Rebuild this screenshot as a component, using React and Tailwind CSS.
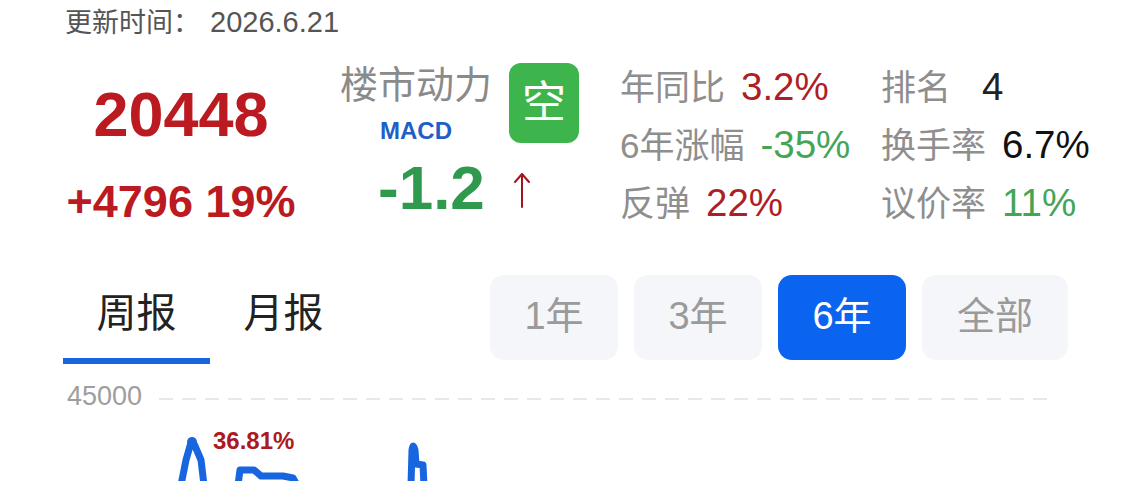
import React from 'react';

const FONT = "font-['Liberation_Sans','Noto_Sans_CJK_SC',sans-serif]";

const stats = [
  [
    { label: '年同比', value: '3.2%', color: 'text-[#ad1f26]' },
    { label: '排名', value: '4', color: 'text-[#222]', gap: 'ml-[31px]' },
  ],
  [
    { label: '6年涨幅', value: '-35%', color: 'text-[#45a556]' },
    { label: '换手率', value: '6.7%', color: 'text-[#111]' },
  ],
  [
    { label: '反弹', value: '22%', color: 'text-[#ad1f26]' },
    { label: '议价率', value: '11%', color: 'text-[#45a556]' },
  ],
];

const ranges = [
  { label: '1年', w: 'w-[128px]' },
  { label: '3年', w: 'w-[128px]' },
  { label: '6年', w: 'w-[128px]', active: true },
  { label: '全部', w: 'w-[146px]' },
];

function Stat({ label, value, color, gap }) {
  return (
    <div className="flex items-center leading-none">
      <span className="text-[35px] text-[#8e8e8e]">{label}</span>
      <span className={`text-[38.5px] ${gap || 'ml-[16px]'} ${color}`}>{value}</span>
    </div>
  );
}

export default function App() {
  return (
    <div className={`w-[1131px] h-[481px] bg-white overflow-hidden ${FONT}`}>
      {/* update time */}
      <div className="h-[50px] pt-[6px] pl-[65px] leading-[32px] text-[#555] whitespace-nowrap">
        <span className="text-[27px]">更新时间：</span>
        <span className="ml-[10px] text-[29px]">2026.6.21</span>
      </div>

      {/* headline numbers */}
      <div className="flex h-[225px]">
        <div className="ml-[65px] w-[232px] pt-[33px] flex flex-col items-center font-bold text-[#ba1a20] leading-none">
          <div className="text-[63px]">20448</div>
          <div className="mt-[33px] text-[45px] whitespace-nowrap">+4796 19%</div>
        </div>

        <div className="ml-[43px] w-[239px] pt-[13px] flex flex-col">
          <div className="flex items-start">
            <div className="w-[152px] mt-[3px] flex flex-col items-center leading-none">
              <div className="text-[38px] text-[#8a8a8a] whitespace-nowrap">楼市动力</div>
              <div className="mt-[15px] text-[24px] font-bold text-[#1f5fc8]">MACD</div>
            </div>
            <div className="ml-[17px] w-[70px] h-[80px] rounded-[12px] bg-[#3db44c] flex items-center justify-center text-white text-[44px] leading-none">
              空
            </div>
          </div>
          <div className="mt-[14px] ml-[38px] flex items-center">
            <span className="text-[62px] font-bold leading-none text-[#2f9a4e]">-1.2</span>
            <svg className="ml-[28px] mt-[4px]" width="18" height="36" viewBox="0 0 18 36">
              <path d="M9 35 V2 M2 10 L9 2 L16 10" fill="none" stroke="#a3141c" strokeWidth="2" strokeLinecap="round" strokeLinejoin="round" />
            </svg>
          </div>
        </div>

        <div className="ml-[41px] pt-[8px] flex flex-col">
          {stats.map((row, i) => (
            <div key={i} className="h-[58px] flex items-center">
              <div className="w-[261px]">
                <Stat {...row[0]} />
              </div>
              <Stat {...row[1]} />
            </div>
          ))}
        </div>
      </div>

      {/* tabs and range buttons */}
      <div className="flex items-start h-[89px]">
        <div className="ml-[63px] flex">
          <div className="w-[147px] flex flex-col items-center">
            <div className="mt-[18px] text-[40px] leading-none text-[#222]">周报</div>
            <div className="mt-[25px] w-full h-[6px] bg-[#1766e0]" />
          </div>
          <div className="w-[147px] flex flex-col items-center">
            <div className="mt-[18px] text-[40px] leading-none text-[#222]">月报</div>
          </div>
        </div>
        <div className="ml-[133px] flex gap-[16px]">
          {ranges.map((r) => (
            <div
              key={r.label}
              className={`${r.w} h-[85px] pb-[3px] rounded-[14px] flex items-center justify-center text-[38px] leading-none ${
                r.active ? 'bg-[#0a64f0] text-white' : 'bg-[#f4f6f9] text-[#9a9a9a]'
              }`}
            >
              {r.label}
            </div>
          ))}
        </div>
      </div>

      {/* chart */}
      <div className="mt-[19px] flex items-start pl-[67px]">
        <span className="text-[27px] leading-none text-[#9e9e9e]">45000</span>
        <div className="mt-[15px] ml-[17px] w-[893px] h-[2px] bg-[repeating-linear-gradient(90deg,#e8e8e8_0_14px,transparent_14px_23px)]" />
      </div>
      <div className="relative h-[71px]">
        <svg className="absolute inset-0" width="1131" height="71" viewBox="0 0 1131 71">
          <g fill="none" stroke="#1766e0" strokeWidth="7" strokeLinecap="round" strokeLinejoin="round">
            <path d="M181 75 L186 50 L190 36 Q192 28 195 36 L201 50 L204 75" />
            <path d="M238 75 L240 60 L254 60 L261 66 L283 66 L293 68 L297 75" />
            <path d="M411 75 L412 40 Q413 32 415 40 L416 54 L423 55 L424 75" />
          </g>
          <circle cx="192" cy="32" r="5" fill="#1766e0" />
        </svg>
        <span className="absolute left-[213px] top-[19px] text-[24px] font-bold leading-none text-[#ab1a20]">36.81%</span>
      </div>
    </div>
  );
}
